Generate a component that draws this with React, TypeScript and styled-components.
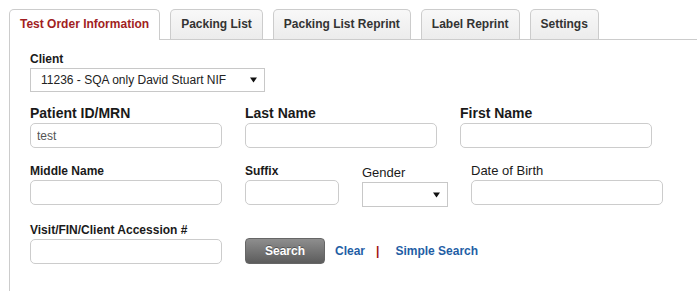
import React from 'react';
import styled, {createGlobalStyle} from 'styled-components';

const GlobalStyle = createGlobalStyle`
	html, body {
		margin: 0;
		padding: 0;
		background: #fff;
	}
	body {
		font-family: 'Liberation Sans', Arial, sans-serif;
		color: #222;
		overflow: hidden;
	}
`;

const tabs = ['Test Order Information', 'Packing List', 'Packing List Reprint', 'Label Reprint', 'Settings'];

const Arrow = () => (
	<svg width='7' height='6' viewBox='0 0 7 6'>
		<path d='M0 0.5 L7 0.5 L3.5 5.5 Z' fill='#111' />
	</svg>
);

const App = () => {
	return (
		<>
			<GlobalStyle />
			<Page>
				<TabBar>
					{tabs.map((t, i) => (
						<Tab key={t} $active={i === 0}>
							{t}
						</Tab>
					))}
				</TabBar>
				<Panel>
					<Label>Client</Label>
					<SelectBox $width={235} $height={24}>
						<span>11236 - SQA only David Stuart NIF</span>
						<Arrow />
					</SelectBox>

					<Row $top={13}>
						<Field>
							<Label $big>Patient ID/MRN</Label>
							<Input $width={192} defaultValue='test' />
						</Field>
						<Field>
							<Label $big>Last Name</Label>
							<Input $width={192} />
						</Field>
						<Field>
							<Label $big>First Name</Label>
							<Input $width={192} />
						</Field>
					</Row>

					<Row $top={16}>
						<Field>
							<Label>Middle Name</Label>
							<Input $width={192} />
						</Field>
						<Field>
							<Label>Suffix</Label>
							<Input $width={94} />
						</Field>
						<Field $shift={2}>
							<Label $plain>Gender</Label>
							<SelectBox $width={86} $height={25}>
								<span />
								<Arrow />
							</SelectBox>
						</Field>
						<Field>
							<Label $plain>Date of Birth</Label>
							<Input $width={192} />
						</Field>
					</Row>

					<Row $top={16}>
						<Field>
							<Label>Visit/FIN/Client Accession #</Label>
							<Input $width={192} />
						</Field>
						<Actions>
							<SearchButton type='button'>Search</SearchButton>
							<LinkText>Clear</LinkText>
							<Separator>|</Separator>
							<LinkText>Simple Search</LinkText>
						</Actions>
					</Row>
				</Panel>
			</Page>
		</>
	);
};

const Page = styled.div`
	padding: 9px 0 0 9px;
`;

const TabBar = styled.div`
	display: flex;
	align-items: flex-end;
	gap: 10px;
`;

const Tab = styled.div<{$active?: boolean}>`
	position: relative;
	z-index: 1;
	box-sizing: border-box;
	height: ${p => (p.$active ? '31px' : '30px')};
	margin-bottom: ${p => (p.$active ? '-1px' : '0')};
	padding: 0 10px;
	border: 1px solid #ccc;
	border-bottom: none;
	border-radius: 5px 5px 0 0;
	background: ${p => (p.$active ? '#fff' : 'linear-gradient(#f8f8f8, #ececec)')};
	color: ${p => (p.$active ? '#a11e22' : '#333')};
	font-size: 12px;
	font-weight: bold;
	line-height: 29px;
	white-space: nowrap;
	cursor: pointer;
`;

const Panel = styled.div`
	box-sizing: border-box;
	min-height: 260px;
	padding: 12px 0 20px 20px;
	border-top: 1px solid #ccc;
	border-left: 1px solid #ccc;
`;

const Label = styled.div<{$big?: boolean; $plain?: boolean}>`
	font-size: ${p => (p.$big ? '14px' : p.$plain ? '13px' : '12px')};
	line-height: ${p => (p.$big ? '16px' : '14px')};
	font-weight: ${p => (p.$plain ? 'normal' : 'bold')};
	color: #1a1a1a;
	margin-bottom: 2px;
	white-space: nowrap;
`;

const Row = styled.div<{$top: number}>`
	display: flex;
	align-items: flex-end;
	gap: 23px;
	margin-top: ${p => p.$top}px;
`;

const Field = styled.div<{$shift?: number}>`
	display: flex;
	flex-direction: column;
	align-self: flex-start;
	margin-top: ${p => p.$shift || 0}px;
`;

const Input = styled.input<{$width: number}>`
	box-sizing: border-box;
	width: ${p => p.$width}px;
	height: 25px;
	margin: 0;
	padding: 0 6px;
	border: 1px solid #ccc;
	border-radius: 5px;
	font-family: 'Liberation Sans', Arial, sans-serif;
	font-size: 12px;
	color: #555;
	background: #fff;
	outline: none;
`;

const SelectBox = styled.div<{$width: number; $height: number}>`
	box-sizing: border-box;
	display: flex;
	align-items: center;
	justify-content: space-between;
	width: ${p => p.$width}px;
	height: ${p => p.$height}px;
	padding: 0 7px 0 10px;
	border: 1px solid #c8c8c8;
	background: #fff;
	font-size: 12px;
	color: #222;
	white-space: nowrap;
	cursor: default;
`;

const Actions = styled.div`
	display: flex;
	align-items: center;
	height: 26px;
`;

const SearchButton = styled.button`
	box-sizing: border-box;
	width: 80px;
	height: 26px;
	margin: 0 10px 0 0;
	border: 1px solid #666;
	border-radius: 4px;
	background: linear-gradient(#8e8e8e, #5c5c5c);
	color: #fff;
	font-family: 'Liberation Sans', Arial, sans-serif;
	font-size: 12px;
	font-weight: bold;
	text-shadow: 0 -1px 0 rgba(0, 0, 0, 0.35);
	cursor: pointer;
`;

const LinkText = styled.a`
	font-size: 12px;
	font-weight: bold;
	color: #1f5ea5;
	cursor: pointer;
	text-decoration: none;
`;

const Separator = styled.span`
	margin: 0 16px 0 11px;
	font-size: 12px;
	font-weight: bold;
	color: #a01010;
`;

export default App;
